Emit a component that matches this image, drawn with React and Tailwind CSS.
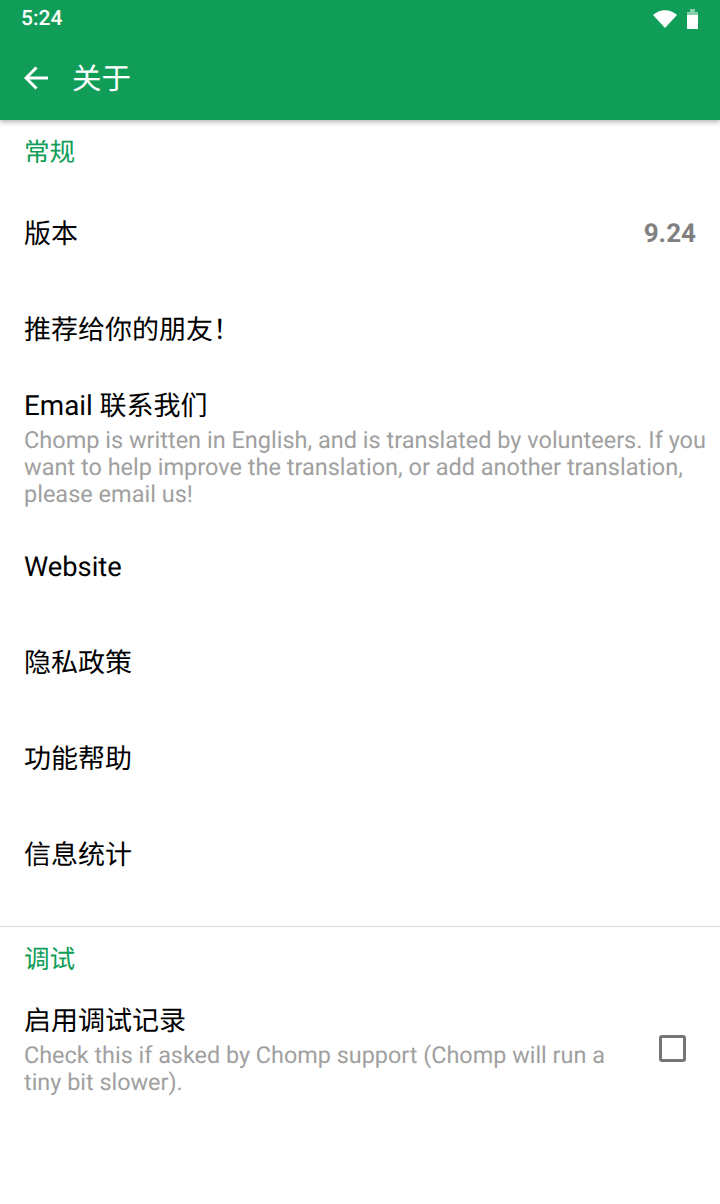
const cjk = "font-['Roboto','Noto_Sans_CJK_SC',sans-serif] [text-rendering:geometricPrecision]"

function Row({ title, height }) {
  return (
    <div className={`flex items-center px-6 text-[27px] text-black ${height}`}>
      {title}
    </div>
  )
}

function SectionTitle({ children }) {
  return <div className="px-6 text-[25.6px] leading-[32px] text-[#0f9d58]">{children}</div>
}

export default function App() {
  return (
    <div className={`w-[720px] h-[1204px] bg-white overflow-hidden ${cjk}`}>
      <div className="relative z-10 h-[120px] bg-[#0f9d58] shadow-[0_2px_5px_rgba(0,0,0,0.3)]">
        <div className="flex h-[38px] items-center justify-between pl-[21px] pr-[22px] text-white">
          <span className="pt-[2px] text-[21px] font-medium">5:24</span>
          <div className="flex items-center gap-[10px]">
            <svg width="24" height="18" viewBox="0 0 24 18">
              <path d="M0 5 A17.5 17.5 0 0 1 24 5 L12 18 Z" fill="#fff" />
            </svg>
            <svg width="11" height="20" viewBox="0 0 11 20">
              <rect x="3" y="0" width="5" height="3" fill="#fff" fillOpacity="0.5" />
              <rect x="0" y="3" width="11" height="3" fill="#fff" fillOpacity="0.5" />
              <rect x="0" y="6" width="11" height="14" fill="#fff" />
            </svg>
          </div>
        </div>
        <div className="flex h-[82px] items-center pl-6">
          <svg width="24" height="24" viewBox="0 0 24 24" fill="none" stroke="#fff" strokeWidth="3" className="-mt-[2px]">
            <path d="M24 12H2M12.5 1.5L2 12l10.5 10.5" />
          </svg>
          <span className="ml-[24px] pt-[2px] text-[29.5px] text-white">关于</span>
        </div>
      </div>

      <div className="pt-[17px]">
        <SectionTitle>常规</SectionTitle>
        <div className="mt-[17px] flex h-[96px] items-center justify-between pl-6 pr-6 text-[27px] text-black">
          <span>版本</span>
          <span className="text-[26px] font-bold text-[#808080]">9.24</span>
        </div>
        <Row title="推荐给你的朋友！" height="h-[97px]" />
        <div className="pl-6 pt-[9px] h-[140px]">
          <div className="mb-[3px] text-[27px] leading-[36px] text-black">
            <span className="text-[27.8px]">Email</span> 联系我们
          </div>
          <p className="text-[23.5px] leading-[27px] text-[#a0a0a0] whitespace-nowrap">
            Chomp is written in English, and is translated by volunteers. If you<br />
            want to help improve the translation, or add another translation,<br />
            please email us!
          </p>
        </div>
        <Row title={<span className="text-[27.3px]">Website</span>} height="h-[96px]" />
        <Row title="隐私政策" height="h-[96px]" />
        <Row title="功能帮助" height="h-[96px]" />
        <Row title="信息统计" height="h-[96px]" />
      </div>

      <div className="mt-[23px] border-t border-[#d9d9d9] pt-[17px]">
        <SectionTitle>调试</SectionTitle>
        <div className="flex items-center justify-between pl-6 pr-[34px] pt-[27px]">
          <div>
            <div className="mb-[3px] text-[27px] leading-[36px] text-black">启用调试记录</div>
            <p className="text-[23.4px] leading-[27px] text-[#a0a0a0] whitespace-nowrap">
              Check this if asked by Chomp support (Chomp will run a<br />
              tiny bit slower).
            </p>
          </div>
          <div className="mb-[3px] h-[27px] w-[27px] rounded-[3px] border-[3px] border-[#757575]" />
        </div>
      </div>
    </div>
  )
}
